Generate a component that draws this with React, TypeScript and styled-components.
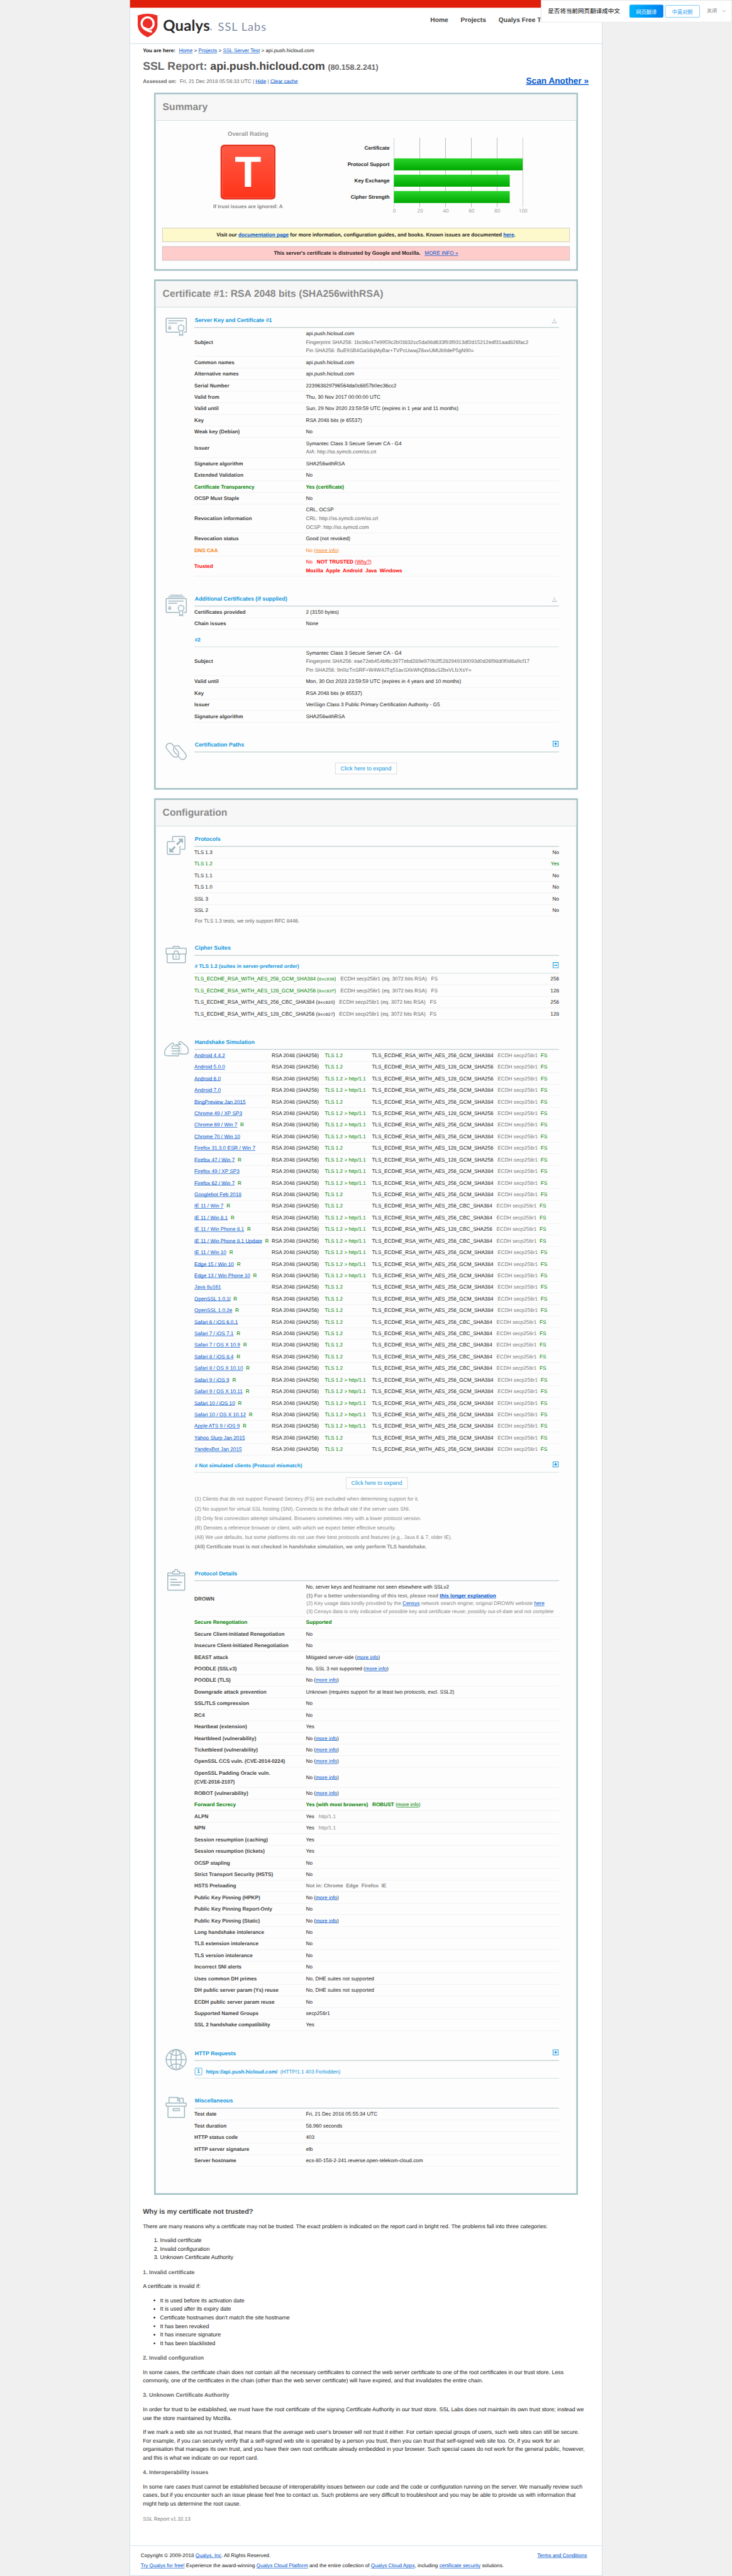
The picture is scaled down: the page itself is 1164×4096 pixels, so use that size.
import React from 'react';
import styled, { createGlobalStyle } from 'styled-components';

const SCALE_X = 1164 / 1706;
const SCALE_Y = 4096 / 6002;

const Global = createGlobalStyle`
  html, body { margin: 0; padding: 0; background: #f0f0f0; }
  * { box-sizing: border-box; }
`;

/* ---------- frame ---------- */

const Viewport = styled.div`
  width: 1164px;
  height: 4096px;
  overflow: hidden;
  background: #f0f0f0;
`;

const Canvas = styled.div`
  position: relative;
  width: 1706px;
  height: 6002px;
  transform: scale(${SCALE_X}, ${SCALE_Y});
  transform-origin: 0 0;
  font-family: 'Liberation Sans', Arial, 'Noto Sans CJK SC', sans-serif;
  font-size: 12px;
  line-height: 20px;
  color: #222;
  text-rendering: geometricPrecision;
`;

const Page = styled.div`
  display: flex;
  flex-direction: column;
  width: 1102px;
  height: 6002px;
  margin-left: 302px;
  background: #fff;
  border: 1px solid #bfd3dc;
  border-top: 0;
`;

const RedBar = styled.div`
  height: 18px;
  background: #e01f0b;
`;

const Header = styled.header`
  display: flex;
  justify-content: space-between;
  height: 84px;
  border-bottom: 1px solid #bdd3da;
`;

const Nav = styled.nav`
  display: flex;
  gap: 29px;
  width: 400px;
  padding-top: 19px;
  font-size: 15px;
  font-weight: bold;
  color: #444;
  white-space: nowrap;
`;

const Link = styled.a<{ $tone?: string; $bold?: boolean }>`
  color: ${(p) => p.$tone || '#0055cc'};
  font-weight: ${(p) => (p.$bold ? 'bold' : 'normal')};
  text-decoration: underline;
  text-decoration-skip-ink: none;
  text-decoration-thickness: 1px;
`;

/* ---------- translate prompt ---------- */

const Prompt = styled.aside`
  position: absolute;
  top: 0;
  right: 0;
  display: flex;
  align-items: center;
  width: 445px;
  height: 52px;
  padding-left: 15px;
  background: #fff;
  border: 1px solid #ddd;
  font-family: 'Noto Sans CJK SC', sans-serif;
  font-size: 12px;
  white-space: nowrap;
`;

const PromptText = styled.span`
  width: 190px;
  font-size: 14px;
  color: #000;
`;

const PromptButton = styled.button<{ $primary?: boolean }>`
  flex: none;
  width: ${(p) => (p.$primary ? 79 : 81)}px;
  height: ${(p) => (p.$primary ? 30 : 29)}px;
  margin-right: 4px;
  padding: 0;
  border: ${(p) => (p.$primary ? '0' : '1px solid #4db4f2')};
  border-radius: 3px;
  background: ${(p) => (p.$primary ? 'linear-gradient(to right, #00b4fb, #0080f0)' : '#fff')};
  color: ${(p) => (p.$primary ? '#fff' : '#0d96f0')};
  font: 12px 'Noto Sans CJK SC', sans-serif;
`;

const PromptClose = styled.span`
  display: flex;
  align-items: center;
  gap: 12px;
  margin-left: 12px;
  font-size: 12px;
  color: #888;
`;

/* ---------- report heading ---------- */

const Intro = styled.section`
  display: flex;
  flex-direction: column;
  height: 114px;
  padding: 6px 31px 0 30px;
`;

const Title = styled.h1`
  margin: 11px 0 7px;
  font-size: 26px;
  line-height: 30px;
  color: #666;
`;

const Host = styled.span`
  color: #444;
`;

const Ip = styled.span`
  font-size: 18px;
`;

const Assessed = styled.div`
  display: flex;
  justify-content: space-between;
  color: #666;
`;

const Scan = styled.a`
  font-size: 20px;
  font-weight: bold;
  color: #0055cc;
  text-decoration: underline;
  text-decoration-thickness: 2px;
`;

const Lead = styled.b`
  margin-right: 8px;
`;

/* ---------- cards ---------- */

const Card = styled.section<{ $h: number }>`
  flex: none;
  display: flex;
  flex-direction: column;
  width: 988px;
  height: ${(p) => p.$h}px;
  margin: 0 0 20px 56px;
  border: 4px solid #a7c3c7;
  background: #fdfdfd;
`;

const CardTitle = styled.h2`
  flex: none;
  height: 61px;
  margin: 0;
  padding-left: 16px;
  border-bottom: 1px solid #c5d3d4;
  background: #f7f7f7;
  font-size: 23px;
  line-height: 59px;
  color: #888;
`;

const CardBody = styled.div`
  display: flex;
  flex-direction: column;
  gap: 36px;
  padding: 14px 0 0 23px;
`;

const Section = styled.div`
  display: flex;
  gap: 17px;
`;

const IconSlot = styled.svg`
  flex: none;
  width: 50px;
  height: 50px;
  margin-top: 6px;
  overflow: visible;
  fill: none;
  stroke: #a0b8c1;
  stroke-width: 2.2;
  stroke-linejoin: round;
  stroke-linecap: round;
`;

const Content = styled.div`
  width: 850px;
`;

const SectionTitle = styled.h3`
  display: flex;
  justify-content: space-between;
  height: 34px;
  margin: 0;
  padding: 0 1px;
  border-bottom: 2px solid #c5d3d4;
  font-size: 13px;
  line-height: 32px;
  color: #0e96dd;
`;

const SubTitle = styled.h4<{ $h: number; $top: number }>`
  display: flex;
  justify-content: space-between;
  height: ${(p) => p.$h}px;
  margin: 0;
  padding: ${(p) => p.$top}px 1px 0;
  border-bottom: 1px solid #c5d3d4;
  font-size: 12px;
  line-height: 20px;
  color: #0e96dd;
`;

const Row = styled.div`
  display: grid;
  grid-template-columns: 260px 590px;
`;

const Cell = styled.div<{ $noLine?: boolean; $color?: string; $bold?: boolean }>`
  display: flex;
  flex-direction: column;
  justify-content: center;
  padding: 3px 0;
  border-bottom: 1px solid ${(p) => (p.$noLine ? 'transparent' : '#ededed')};
  color: ${(p) => p.$color || '#222'};
  font-weight: ${(p) => (p.$bold ? 'bold' : 'normal')};
  white-space: pre;
`;

const PairRow = styled.div<{ $color?: string }>`
  display: flex;
  justify-content: space-between;
  height: 27px;
  padding-top: 3px;
  border-bottom: 1px solid #ededed;
  color: ${(p) => p.$color || '#222'};
  white-space: pre;
`;

const SimRow = styled.div`
  display: grid;
  grid-template-columns: 180px 124px 110px 1fr;
  height: 27px;
  padding-top: 3px;
  border-bottom: 1px solid #ededed;
  white-space: pre;
`;

const Tone = styled.span<{ $c: string; $bold?: boolean; $ml?: number }>`
  color: ${(p) => p.$c};
  font-weight: ${(p) => (p.$bold ? 'bold' : 'inherit')};
  margin-left: ${(p) => p.$ml || 0}px;
`;

const Hex = styled.span`
  font-family: 'Liberation Mono', monospace;
  font-size: 10px;
`;

const ExpandWrap = styled.div<{ $top: number; $shift: number }>`
  display: flex;
  justify-content: center;
  padding-top: ${(p) => p.$top}px;
  margin-left: ${(p) => p.$shift}px;
`;

const Expand = styled.button`
  width: 144px;
  height: 27px;
  padding: 0;
  border: 1px solid #ccc;
  background: #fff;
  color: #0e96dd;
  font: 13px 'Liberation Sans', Arial, sans-serif;
`;

const Notes = styled.div<{ $lh: number; $top: number }>`
  padding: ${(p) => p.$top}px 0 0 1px;
  line-height: ${(p) => p.$lh}px;
  color: #888;
  white-space: nowrap;
`;

const ToggleBox = styled.svg<{ $mt: number }>`
  flex: none;
  width: 14px;
  height: 14px;
  margin-top: ${(p) => p.$mt}px;
  fill: none;
  stroke: #0e96dd;
  stroke-width: 1.6;
`;

const DownloadSvg = styled.svg`
  width: 12px;
  height: 12px;
  margin: 12px 4px 0 0;
  fill: #c8d5d9;
`;

const Badge = styled.span`
  width: 17px;
  height: 17px;
  margin-right: 9px;
  border: 1.5px solid #0e96dd;
  border-radius: 2px;
  line-height: 15px;
  text-align: center;
`;

const RequestText = styled.span`
  flex: 1;
  line-height: 18px;
  white-space: pre;
`;

const RequestStatus = styled.span`
  font-weight: normal;
`;

/* ---------- summary ---------- */

const SummaryTop = styled.div`
  display: flex;
  height: 250px;
  padding: 20px 0 0 115px;
`;

const RatingCol = styled.div`
  display: flex;
  flex-direction: column;
  align-items: center;
  width: 200px;
  font-weight: bold;
  color: #888;
`;

const RatingLabel = styled.div`
  font-size: 14px;
  color: #999;
`;

const Rating = styled.div`
  width: 128px;
  height: 128px;
  margin: 16px 0 6px;
  border: 4px solid #e8321a;
  border-radius: 9px;
  background: linear-gradient(#ff5843, #ff341b);
  color: #fff;
  font-size: 101px;
  line-height: 121px;
  text-align: center;
`;

const ChartLabels = styled.div`
  display: flex;
  flex-direction: column;
  gap: 10px;
  width: 230px;
  padding-top: 30px;
  line-height: 28px;
  text-align: right;
  font-weight: bold;
`;

const ChartArea = styled.div`
  width: 301px;
  margin: 20px 0 0 10px;
`;

const Plot = styled.div`
  display: flex;
  flex-direction: column;
  gap: 10px;
  height: 162px;
  padding: 10px 0;
  background: repeating-linear-gradient(to right, #bbb 0 1px, transparent 1px 60px);
`;

const Bar = styled.div`
  height: 28px;
  background: linear-gradient(#29d429, #00a800);
`;

const Ticks = styled.div`
  display: flex;
  width: 360px;
  margin: -2px 0 0 -29px;
  font-family: 'Open Sans', sans-serif;
  color: #999;
`;

const Tick = styled.span`
  width: 60px;
  text-align: center;
`;

const Notice = styled.div<{ $bg: string }>`
  width: 950px;
  height: 33px;
  margin: 0 0 10px 15px;
  border: 1px solid #bbb;
  background: ${(p) => p.$bg};
  line-height: 31px;
  text-align: center;
  font-weight: bold;
`;

/* ---------- article & footer ---------- */

const Article = styled.article`
  flex: 1;
  padding: 10px 30px 0;
  font-size: 13px;
  line-height: 20px;
  h3 { margin: 0 0 13px; font-size: 16px; color: #444; }
  h4 { margin: 14px 0 13px; font-size: 13px; color: #666; }
  p { margin: 0 0 13px; white-space: nowrap; }
  ol, ul { margin: 0 0 13px; padding-left: 40px; }
`;

const Version = styled.div`
  padding-top: 2px;
  font-size: 12px;
  color: #777;
`;

const Footer = styled.footer`
  display: flex;
  justify-content: space-between;
  height: 70px;
  padding: 10px 35px 0 25px;
  border-top: 1px solid #bfd3dc;
  line-height: 24px;
`;

/* ---------- drawings ---------- */

const Logo = () => (
  <svg width="330" height="83" viewBox="303 18 330 83">
    <path d="M321 36Q332 32 344 32Q356 32 367 36V59Q366 77 344 87Q322 77 321 59Z" fill="#ed2e26" />
    <path d="M350 67.500Q358 63.500 358 55A14 14.500 0 0 0 330 55Q331 69 354 74" fill="none" stroke="#fff" strokeWidth="5" />
    <path d="M336 63.500Q342 68.500 350 67.500" fill="none" stroke="#fff" strokeWidth="3.500" />
    <text x="380" y="71.5" fontFamily="Lato, sans-serif" fontWeight="700" fontSize="35" fill="#2b2a29" textLength="109">Qualys</text>
    <circle cx="491.8" cy="69" r="1.8" fill="#999" />
    <text x="508" y="71.7" fontFamily="Lato, sans-serif" fontSize="26.5" fill="#7d8ca3" textLength="112">SSL Labs</text>
  </svg>
);

const Plus = ({ mt = 4, minus = false }: { mt?: number; minus?: boolean }) => (
  <ToggleBox $mt={mt} viewBox="0 0 14 14">
    <rect x="0.8" y="0.8" width="12.4" height="12.4" />
    <path d={minus ? 'M3.5 7H10.5' : 'M3.5 7H10.5M7 3.5V10.5'} strokeWidth="2" />
  </ToggleBox>
);

const Download = () => (
  <DownloadSvg viewBox="0 0 12 12">
    <path d="M5 0H7V4H9.2L6 7.4L2.8 4H5ZM0 8H3.5L6 9.6L8.5 8H12V12H0Z" />
  </DownloadSvg>
);

const Lock = ({ y }: { y: number }) => (
  <g>
    <rect x="6.3" y={y + 3.2} width="6.4" height="5.2" fill="#a0b8c1" stroke="none" />
    <path d={`M7.5 ${y + 3.5}V${y + 2}a2 2 0 0 1 4 0V${y + 3.5}`} strokeWidth="1.3" />
    <path d={`M9.5 ${y + 5}V${y + 6.5}`} stroke="#fff" strokeWidth="1" />
  </g>
);

const CertIcon = ({ dy = 0, stacked = false }: { dy?: number; stacked?: boolean }) => (
  <IconSlot viewBox="0 0 50 50">
    {stacked && <path d="M11 1.8H39M6.5 6H43.5" />}
    <g transform={`translate(0 ${dy})`}>
      <path d="M30 38H2.2a1 1 0 0 1-1-1V6.5a1 1 0 0 1 1-1H47.3a1 1 0 0 1 1 1V37a1 1 0 0 1-1 1H43" />
      <path d="M7 11.5H41M7 16.8H26" />
      <circle cx="36" cy="28" r="6.8" />
      <path d="M32.3 34.5V46.2L36 43L39.8 46.2V34.5" strokeWidth="2" />
      <Lock y={23} />
    </g>
  </IconSlot>
);

const ChainIcon = () => (
  <IconSlot viewBox="0 0 50 50">
    <path d="M19.5 14L16 9.8C12 5 6 6 3 10C0.5 13.5 1 18 4 21.5L16 36C20 40.5 25.500 40 28 37C31 33.500 31 29 28.500 25.500L22.500 18" />
    <path d="M29.5 37L33 41.3C37 46 43 45.5 46 41.5C48.5 38 48.5 33.500 45.500 30L33 15.500C29 10.800 23 11.500 20 15.500C17.500 19 18 23.500 20.500 27L26 33" />
  </IconSlot>
);

const ProtocolIcon = () => (
  <IconSlot viewBox="0 0 50 50">
    <path d="M16 13V5.5a1.5 1.5 0 0 1 1.5-1.5H43.5A1.5 1.5 0 0 1 45 5.5V32.5A1.5 1.5 0 0 1 43.5 34H37" />
    <path d="M21 16H5.5A1.5 1.5 0 0 0 4 17.5V44A1.5 1.5 0 0 0 5.5 45.5H32A1.5 1.5 0 0 0 33.5 44V27" />
    <path d="M26 23L36 13" strokeWidth="4.5" strokeLinecap="butt" />
    <path d="M29 9H40.5V20.5Z" fill="#a0b8c1" stroke="none" />
    <path d="M22 28L13 37" strokeWidth="4.5" strokeLinecap="butt" />
    <path d="M8.5 29.5V41H20Z" fill="#a0b8c1" stroke="none" />
  </IconSlot>
);

const CaseIcon = () => (
  <IconSlot viewBox="0 0 50 50">
    <path d="M17 10V8a2 2 0 0 1 2-2H30a2 2 0 0 1 2 2V10" />
    <path d="M18 24H2.5a1.3 1.3 0 0 1-1.3-1.3V11.8a1.3 1.3 0 0 1 1.3-1.3H46.7a1.3 1.3 0 0 1 1.3 1.3V22.7a1.3 1.3 0 0 1-1.3 1.3H31" />
    <path d="M3.5 24V43a1 1 0 0 0 1 1H45a1 1 0 0 0 1-1V24" />
    <rect x="17.3" y="24" width="14.4" height="12" rx="1.2" />
    <path d="M19.5 24V21a5 4.5 0 0 1 10 0V24" />
    <path d="M24.5 28.5V31.5" />
  </IconSlot>
);

const HandsIcon = () => (
  <IconSlot viewBox="0 0 50 50">
    <path d="M14 22L19 16.5C20.5 13.5 17 10.5 13.5 13L3 22.5C-1.5 26.5 -2.500 31 -2.500 36C-2.500 40.500 1 42 6 42H21" />
    <path d="M21 19H29M14.500 25H29M14.500 31H29M14.500 37H27" />
    <path d="M29 19.500a2.800 2.800 0 0 1 0 5.700a2.900 2.900 0 0 1 0 5.800a2.900 2.900 0 0 1 0 5.800a2.700 2.700 0 0 1-3 5.200H21" />
    <path d="M24 16H36L30.500 12.500C30 9 34 8 37 10L47 18C51 21 53 25 53 31C53 36 50 38 46 38H34" />
    <path d="M35.500 24H36M35.500 30H36M35.500 36H36" />
  </IconSlot>
);

const ClipboardIcon = () => (
  <IconSlot viewBox="0 0 50 50">
    <path d="M16 9H6a1 1 0 0 0-1 1V48a1 1 0 0 0 1 1H43.500a1 1 0 0 0 1-1V10a1 1 0 0 0-1-1H33" />
    <path d="M16.500 5.500H21V3.500a3.500 2.800 0 0 1 7 0V5.500H32.500V11.500H16.500ZM5 15.500H44" />
    <path d="M12 24H25M12 30.500H37M12 37H33" strokeWidth="2.600" />
  </IconSlot>
);

const GlobeIcon = () => (
  <IconSlot viewBox="0 0 50 50">
    <circle cx="24.5" cy="25" r="23.3" />
    <ellipse cx="24.5" cy="25" rx="12.5" ry="23.3" />
    <path d="M24.500 1.700V48.300M1.200 25H47.800M9 9Q24.500 21 40 9M9 41Q24.500 29 40 41" />
  </IconSlot>
);

const BoxIcon = () => (
  <IconSlot viewBox="0 0 50 50">
    <path d="M8 14V2H28V9.500H33V14M28 2L33 8M30 4H41V14" />
    <rect x="1.2" y="15" width="46.8" height="7.5" rx="1" />
    <path d="M5.500 22.500V48.500H44V22.500" />
    <rect x="17.3" y="28" width="15" height="5" rx="1.5" />
  </IconSlot>
);

/* ---------- data ---------- */

const LABEL = '#444';
const GREEN = '#007f00';
const GREY = '#666';
const ORANGE = '#f88017';
const RED = '#f00';

type Field = {
  label: React.ReactNode;
  value: React.ReactNode;
  color?: string;
  bold?: boolean;
  noLine?: boolean;
};

const f = (label: React.ReactNode, value: React.ReactNode, extra: Partial<Field> = {}): Field => ({ label, value, ...extra });

const MoreInfo = ({ tone }: { tone?: string }) => (
  <>(<Link $tone={tone}>more info</Link>)</>
);

const noMore = <div>No <MoreInfo /></div>;

const certFields: Field[] = [
  f('Subject', <>
    <div>api.push.hicloud.com</div>
    <Tone $c={GREY}>Fingerprint SHA256: 1bcb6c47e9959c2b03832cc5da98d633f93f9313df2d15212edf31aad826fac2</Tone>
    <Tone $c={GREY}>Pin SHA256: BuE9SB4GaS6qMyBar+TVPcUwwjZ6xvUMUb9deP5gN90=</Tone>
  </>),
  f('Common names', 'api.push.hicloud.com'),
  f('Alternative names', 'api.push.hicloud.com'),
  f('Serial Number', '223963829796564da0c6857b0ec36cc2', { noLine: true }),
  f('Valid from', 'Thu, 30 Nov 2017 00:00:00 UTC'),
  f('Valid until', 'Sun, 29 Nov 2020 23:59:59 UTC (expires in 1 year and 11 months)'),
  f('Key', 'RSA 2048 bits (e 65537)'),
  f('Weak key (Debian)', 'No'),
  f('Issuer', <>
    <div>Symantec Class 3 Secure Server CA - G4</div>
    <Tone $c={GREY}>AIA: http://ss.symcb.com/ss.crt</Tone>
  </>),
  f('Signature algorithm', 'SHA256withRSA'),
  f('Extended Validation', 'No'),
  f('Certificate Transparency', 'Yes (certificate)', { color: GREEN, bold: true }),
  f('OCSP Must Staple', 'No'),
  f('Revocation information', <>
    <div>CRL, OCSP</div>
    <Tone $c={GREY}>CRL: http://ss.symcb.com/ss.crl</Tone>
    <Tone $c={GREY}>OCSP: http://ss.symcd.com</Tone>
  </>),
  f('Revocation status', 'Good (not revoked)'),
  f('DNS CAA', <div>No <MoreInfo tone={ORANGE} /></div>, { color: ORANGE }),
  f('Trusted', <>
    <div>No{'   '}<b>NOT TRUSTED</b> (<Link $tone={RED}>Why?</Link>)</div>
    <b>{'Mozilla  Apple  Android  Java  Windows'}</b>
  </>, { color: RED }),
];

const additional: Field[] = [f('Certificates provided', '2 (3150 bytes)'), f('Chain issues', 'None')];

const secondCert: Field[] = [
  f('Subject', <>
    <div>Symantec Class 3 Secure Server CA - G4</div>
    <Tone $c={GREY}>Fingerprint SHA256: eae72eb454bf6c3977ebd289e970b2f5282949190093d0d26f98d0f0d6a9cf17</Tone>
    <Tone $c={GREY}>Pin SHA256: 9n0izTnSRF+W4W4JTq51avSXkWhQB8duS2bxVLfzXsY=</Tone>
  </>),
  f('Valid until', 'Mon, 30 Oct 2023 23:59:59 UTC (expires in 4 years and 10 months)'),
  f('Key', 'RSA 2048 bits (e 65537)'),
  f('Issuer', 'VeriSign Class 3 Public Primary Certification Authority - G5'),
  f('Signature algorithm', 'SHA256withRSA'),
];

const protocols: [string, string][] = [
  ['TLS 1.3', 'No'], ['TLS 1.2', 'Yes'], ['TLS 1.1', 'No'], ['TLS 1.0', 'No'], ['SSL 3', 'No'], ['SSL 2', 'No'],
];

const suites: [string, string, string, boolean][] = [
  ['TLS_ECDHE_RSA_WITH_AES_256_GCM_SHA384', '0xc030', '256', true],
  ['TLS_ECDHE_RSA_WITH_AES_128_GCM_SHA256', '0xc02f', '128', true],
  ['TLS_ECDHE_RSA_WITH_AES_256_CBC_SHA384', '0xc028', '256', false],
  ['TLS_ECDHE_RSA_WITH_AES_128_CBC_SHA256', '0xc027', '128', false],
];

const G256 = '256_GCM_SHA384';
const G128 = '128_GCM_SHA256';
const C256 = '256_CBC_SHA384';
const C128 = '128_CBC_SHA256';

/* name, reference client, negotiates http/1.1, suite suffix */
const clients: [string, number, number, string][] = [
  ['Android 4.4.2', 0, 0, G256],
  ['Android 5.0.0', 0, 0, G128],
  ['Android 6.0', 0, 1, G128],
  ['Android 7.0', 0, 1, G256],
  ['BingPreview Jan 2015', 0, 0, G256],
  ['Chrome 49 / XP SP3', 0, 1, G128],
  ['Chrome 69 / Win 7', 1, 1, G256],
  ['Chrome 70 / Win 10', 0, 1, G256],
  ['Firefox 31.3.0 ESR / Win 7', 0, 0, G128],
  ['Firefox 47 / Win 7', 1, 1, G128],
  ['Firefox 49 / XP SP3', 0, 1, G256],
  ['Firefox 62 / Win 7', 1, 1, G256],
  ['Googlebot Feb 2018', 0, 0, G256],
  ['IE 11 / Win 7', 1, 0, C256],
  ['IE 11 / Win 8.1', 1, 1, C256],
  ['IE 11 / Win Phone 8.1', 1, 1, C128],
  ['IE 11 / Win Phone 8.1 Update', 1, 1, C256],
  ['IE 11 / Win 10', 1, 1, G256],
  ['Edge 15 / Win 10', 1, 1, G256],
  ['Edge 13 / Win Phone 10', 1, 1, G256],
  ['Java 8u161', 0, 0, G256],
  ['OpenSSL 1.0.1l', 1, 0, G256],
  ['OpenSSL 1.0.2e', 1, 0, G256],
  ['Safari 6 / iOS 6.0.1', 0, 0, C256],
  ['Safari 7 / iOS 7.1', 1, 0, C256],
  ['Safari 7 / OS X 10.9', 1, 0, C256],
  ['Safari 8 / iOS 8.4', 1, 0, C256],
  ['Safari 8 / OS X 10.10', 1, 0, C256],
  ['Safari 9 / iOS 9', 1, 1, G256],
  ['Safari 9 / OS X 10.11', 1, 1, G256],
  ['Safari 10 / iOS 10', 1, 1, G256],
  ['Safari 10 / OS X 10.12', 1, 1, G256],
  ['Apple ATS 9 / iOS 9', 1, 1, G256],
  ['Yahoo Slurp Jan 2015', 0, 0, G256],
  ['YandexBot Jan 2015', 0, 0, G256],
];

const details: Field[] = [
  f('DROWN', <>
    <div>No, server keys and hostname not seen elsewhere with SSLv2</div>
    <Notes $lh={18} $top={2}>
      <b>(1) For a better understanding of this test, please read <Link $bold>this longer explanation</Link></b><br />
      (2) Key usage data kindly provided by the <Link>Censys</Link> network search engine; original DROWN website <Link>here</Link><br />
      (3) Censys data is only indicative of possible key and certificate reuse; possibly out-of-date and not complete
    </Notes>
  </>),
  f('Secure Renegotiation', 'Supported', { color: GREEN, bold: true }),
  f('Secure Client-Initiated Renegotiation', 'No'),
  f('Insecure Client-Initiated Renegotiation', 'No'),
  f('BEAST attack', <div>Mitigated server-side <MoreInfo /></div>),
  f('POODLE (SSLv3)', <div>No, SSL 3 not supported <MoreInfo /></div>),
  f('POODLE (TLS)', noMore),
  f('Downgrade attack prevention', 'Unknown (requires support for at least two protocols, excl. SSL2)'),
  f('SSL/TLS compression', 'No'),
  f('RC4', 'No'),
  f('Heartbeat (extension)', 'Yes'),
  f('Heartbleed (vulnerability)', noMore),
  f('Ticketbleed (vulnerability)', noMore),
  f('OpenSSL CCS vuln. (CVE-2014-0224)', noMore),
  f(<>OpenSSL Padding Oracle vuln.<br />(CVE-2016-2107)</>, noMore),
  f('ROBOT (vulnerability)', noMore),
  f('Forward Secrecy', <div><b>{'Yes (with most browsers)   ROBUST'}</b> <MoreInfo tone={GREEN} /></div>, { color: GREEN }),
  f('ALPN', <div>Yes{'   '}<Tone $c="#888">http/1.1</Tone></div>),
  f('NPN', <div>Yes{'   '}<Tone $c="#888">http/1.1</Tone></div>),
  f('Session resumption (caching)', 'Yes'),
  f('Session resumption (tickets)', 'Yes'),
  f('OCSP stapling', 'No'),
  f('Strict Transport Security (HSTS)', 'No'),
  f('HSTS Preloading', <Tone $c="#888" $bold>{'Not in: Chrome  Edge  Firefox  IE'}</Tone>),
  f('Public Key Pinning (HPKP)', noMore),
  f('Public Key Pinning Report-Only', 'No'),
  f('Public Key Pinning (Static)', noMore),
  f('Long handshake intolerance', 'No'),
  f('TLS extension intolerance', 'No'),
  f('TLS version intolerance', 'No'),
  f('Incorrect SNI alerts', 'No'),
  f('Uses common DH primes', 'No, DHE suites not supported'),
  f('DH public server param (Ys) reuse', 'No, DHE suites not supported'),
  f('ECDH public server param reuse', 'No'),
  f('Supported Named Groups', 'secp256r1'),
  f('SSL 2 handshake compatibility', 'Yes'),
];

const misc: Field[] = [
  f('Test date', 'Fri, 21 Dec 2018 05:55:34 UTC'),
  f('Test duration', '58.960 seconds'),
  f('HTTP status code', '403'),
  f('HTTP server signature', 'elb'),
  f('Server hostname', 'ecs-80-158-2-241.reverse.open-telekom-cloud.com'),
];

const scores: [string, number][] = [['Certificate', 0], ['Protocol Support', 100], ['Key Exchange', 90], ['Cipher Strength', 90]];

const Fields = ({ items }: { items: Field[] }) => (
  <>
    {items.map((it, i) => (
      <Row key={i}>
        <Cell $color={it.color || LABEL} $bold><div>{it.label}</div></Cell>
        <Cell $color={it.color} $bold={it.bold} $noLine={it.noLine}>{it.value}</Cell>
      </Row>
    ))}
  </>
);

export default function App() {
  return (
    <Viewport>
      <Global />
      <Canvas>
        <Page>
          <RedBar />
          <Header>
            <Logo />
            <Nav><span>Home</span><span>Projects</span><span>Qualys Free Trial</span></Nav>
          </Header>

          <Intro>
            <div>
              <Lead>You are here:</Lead>
              <Link>Home</Link> &gt; <Link>Projects</Link> &gt; <Link>SSL Server Test</Link> &gt; api.push.hicloud.com
            </div>
            <Title>SSL Report: <Host>api.push.hicloud.com</Host> <Ip>(80.158.2.241)</Ip></Title>
            <Assessed>
              <span><Lead>Assessed on:</Lead>Fri, 21 Dec 2018 05:56:33 UTC | <Link>Hide</Link> | <Link>Clear cache</Link></span>
              <Scan>Scan Another »</Scan>
            </Assessed>
          </Intro>

          <Card $h={415}>
            <CardTitle>Summary</CardTitle>
            <SummaryTop>
              <RatingCol>
                <RatingLabel>Overall Rating</RatingLabel>
                <Rating>T</Rating>
                <div>If trust issues are ignored: A</div>
              </RatingCol>
              <ChartLabels>{scores.map(([n]) => <div key={n}>{n}</div>)}</ChartLabels>
              <ChartArea>
                <Plot>{scores.map(([n, v]) => <Bar key={n} style={{ width: v * 3 }} />)}</Plot>
                <Ticks>{[0, 20, 40, 60, 80, 100].map((t) => <Tick key={t}>{t}</Tick>)}</Ticks>
              </ChartArea>
            </SummaryTop>
            <Notice $bg="#fef8cd">
              Visit our <Link $bold>documentation page</Link> for more information, configuration guides, and books. Known issues are documented <Link $bold>here</Link>.
            </Notice>
            <Notice $bg="#ffcccc">
              This server's certificate is distrusted by Google and Mozilla. &nbsp;&nbsp;<Link>MORE INFO »</Link>
            </Notice>
          </Card>

          <Card $h={1189}>
            <CardTitle>Certificate #1: RSA 2048 bits (SHA256withRSA)</CardTitle>
            <CardBody>
              <Section>
                <CertIcon />
                <Content>
                  <SectionTitle>Server Key and Certificate #1<Download /></SectionTitle>
                  <Fields items={certFields} />
                </Content>
              </Section>
              <Section>
                <CertIcon stacked dy={4} />
                <Content>
                  <SectionTitle>Additional Certificates (if supplied)<Download /></SectionTitle>
                  <Fields items={additional} />
                  <SubTitle $h={41} $top={14}>#2</SubTitle>
                  <Fields items={secondCert} />
                </Content>
              </Section>
              <Section>
                <ChainIcon />
                <Content>
                  <SectionTitle>Certification Paths<Plus mt={7} /></SectionTitle>
                  <ExpandWrap $top={24} $shift={-50}><Expand>Click here to expand</Expand></ExpandWrap>
                </Content>
              </Section>
            </CardBody>
          </Card>

          <Card $h={3254}>
            <CardTitle>Configuration</CardTitle>
            <CardBody>
              <Section>
                <ProtocolIcon />
                <Content>
                  <SectionTitle>Protocols</SectionTitle>
                  {protocols.map(([n, v]) => (
                    <PairRow key={n} $color={v === 'Yes' ? GREEN : undefined}><span>{n}</span><span>{v}</span></PairRow>
                  ))}
                  <Notes $lh={22} $top={0}><Tone $c={GREY}>For TLS 1.3 tests, we only support RFC 8446.</Tone></Notes>
                </Content>
              </Section>
              <Section>
                <CaseIcon />
                <Content>
                  <SectionTitle>Cipher Suites</SectionTitle>
                  <SubTitle $h={41} $top={14}># TLS 1.2 (suites in server-preferred order)<Plus minus mt={1} /></SubTitle>
                  {suites.map(([n, hex, bits, good]) => (
                    <PairRow key={n}>
                      <span>
                        <Tone $c={good ? GREEN : '#222'}>{n} (<Hex>{hex}</Hex>)</Tone>
                        <Tone $c={GREY}>{'   ECDH secp256r1 (eq. 3072 bits RSA)   FS'}</Tone>
                      </span>
                      <span>{bits}</span>
                    </PairRow>
                  ))}
                </Content>
              </Section>
              <Section>
                <HandsIcon />
                <Content>
                  <SectionTitle>Handshake Simulation</SectionTitle>
                  {clients.map(([n, r, alpn, suite]) => (
                    <SimRow key={n}>
                      <span><Link>{n}</Link>{r ? <Tone $c={GREEN} $ml={7}>R</Tone> : null}</span>
                      <span>RSA 2048 (SHA256)</span>
                      <Tone $c={GREEN}>{alpn ? 'TLS 1.2 > http/1.1' : 'TLS 1.2'}</Tone>
                      <span>
                        TLS_ECDHE_RSA_WITH_AES_{suite}
                        <Tone $c="#777" $ml={10}>ECDH secp256r1</Tone>
                        <Tone $c={GREEN} $ml={7}>FS</Tone>
                      </span>
                    </SimRow>
                  ))}
                  <SubTitle $h={40} $top={14}># Not simulated clients (Protocol mismatch)<Plus mt={0} /></SubTitle>
                  <ExpandWrap $top={11} $shift={0}><Expand>Click here to expand</Expand></ExpandWrap>
                  <Notes $lh={22} $top={13}>
                    (1) Clients that do not support Forward Secrecy (FS) are excluded when determining support for it.<br />
                    (2) No support for virtual SSL hosting (SNI). Connects to the default site if the server uses SNI.<br />
                    (3) Only first connection attempt simulated. Browsers sometimes retry with a lower protocol version.<br />
                    (R) Denotes a reference browser or client, with which we expect better effective security.<br />
                    (All) We use defaults, but some platforms do not use their best protocols and features (e.g., Java 6 &amp; 7, older IE).<br />
                    <b>(All) Certificate trust is not checked in handshake simulation, we only perform TLS handshake.</b>
                  </Notes>
                </Content>
              </Section>
              <Section>
                <ClipboardIcon />
                <Content>
                  <SectionTitle>Protocol Details</SectionTitle>
                  <Fields items={details} />
                </Content>
              </Section>
              <Section>
                <GlobeIcon />
                <Content>
                  <SectionTitle>HTTP Requests<Plus mt={7} /></SectionTitle>
                  <SubTitle $h={41} $top={16}>
                    <Badge>1</Badge>
                    <RequestText>https://api.push.hicloud.com/<RequestStatus>{'  (HTTP/1.1 403 Forbidden)'}</RequestStatus></RequestText>
                  </SubTitle>
                </Content>
              </Section>
              <Section>
                <BoxIcon />
                <Content>
                  <SectionTitle>Miscellaneous</SectionTitle>
                  <Fields items={misc} />
                </Content>
              </Section>
            </CardBody>
          </Card>

          <Article>
            <h3>Why is my certificate not trusted?</h3>
            <p>There are many reasons why a certificate may not be trusted. The exact problem is indicated on the report card in bright red. The problems fall into three categories:</p>
            <ol><li>Invalid certificate</li><li>Invalid configuration</li><li>Unknown Certificate Authority</li></ol>
            <h4>1. Invalid certificate</h4>
            <p>A certificate is invalid if:</p>
            <ul>
              <li>It is used before its activation date</li>
              <li>It is used after its expiry date</li>
              <li>Certificate hostnames don't match the site hostname</li>
              <li>It has been revoked</li>
              <li>It has insecure signature</li>
              <li>It has been blacklisted</li>
            </ul>
            <h4>2. Invalid configuration</h4>
            <p>
              In some cases, the certificate chain does not contain all the necessary certificates to connect the web server certificate to one of the root certificates in our trust store. Less<br />
              commonly, one of the certificates in the chain (other than the web server certificate) will have expired, and that invalidates the entire chain.
            </p>
            <h4>3. Unknown Certificate Authority</h4>
            <p>
              In order for trust to be established, we must have the root certificate of the signing Certificate Authority in our trust store. SSL Labs does not maintain its own trust store; instead we<br />
              use the store maintained by Mozilla.
            </p>
            <p>
              If we mark a web site as not trusted, that means that the average web user's browser will not trust it either. For certain special groups of users, such web sites can still be secure.<br />
              For example, if you can securely verify that a self-signed web site is operated by a person you trust, then you can trust that self-signed web site too. Or, if you work for an<br />
              organisation that manages its own trust, and you have their own root certificate already embedded in your browser. Such special cases do not work for the general public, however,<br />
              and this is what we indicate on our report card.
            </p>
            <h4>4. Interoperability issues</h4>
            <p>
              In some rare cases trust cannot be established because of interoperability issues between our code and the code or configuration running on the server. We manually review such<br />
              cases, but if you encounter such an issue please feel free to contact us. Such problems are very difficult to troubleshoot and you may be able to provide us with information that<br />
              might help us determine the root cause.
            </p>
            <Version>SSL Report v1.32.13</Version>
          </Article>

          <Footer>
            <div>
              Copyright © 2009-2018 <Link>Qualys, Inc</Link>. All Rights Reserved.<br />
              <Link>Try Qualys for free!</Link> Experience the award-winning <Link>Qualys Cloud Platform</Link> and the entire collection of <Link>Qualys Cloud Apps</Link>, including <Link>certificate security</Link> solutions.
            </div>
            <Link>Terms and Conditions</Link>
          </Footer>
        </Page>

        <Prompt>
          <PromptText>是否将当前网页翻译成中文</PromptText>
          <PromptButton $primary style={{ marginLeft: 0 }}>网页翻译</PromptButton>
          <PromptButton>中英对照</PromptButton>
          <PromptClose>
            关闭
            <svg width="9" height="6" viewBox="0 0 9 6" fill="none" stroke="#888" strokeWidth="1"><path d="M0.500 0.500L4.500 5L8.500 0.500" /></svg>
          </PromptClose>
        </Prompt>
      </Canvas>
    </Viewport>
  );
}
